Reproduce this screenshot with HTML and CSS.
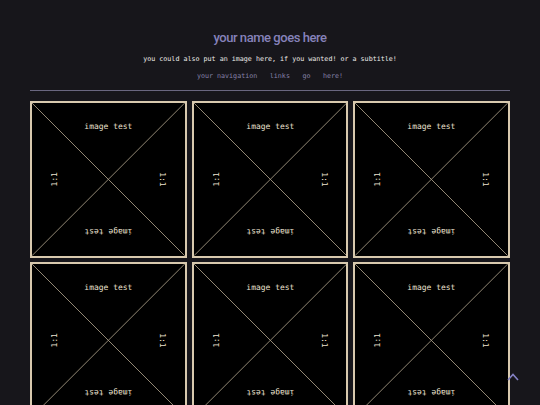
FILE: index.html
```html
<!DOCTYPE html>
<html>
<head>
<meta charset="utf-8">
<link rel="stylesheet" href="styles.css">
</head>
<body>
<div class="page">
  <header class="header">
    <h1 class="title">your name goes here</h1>
    <p class="subtitle">you could also put an image here, if you wanted! or a subtitle!</p>
    <nav class="nav">
      <a href="#">your navigation</a>
      <a href="#">links</a>
      <a href="#">go</a>
      <a href="#">here!</a>
    </nav>
  </header>
  <hr class="rule">
  <main class="grid">
    <div class="card"><svg class="ph" viewBox="0 0 153 153"><line x1="0" y1="0" x2="153" y2="153"/><line x1="153" y1="0" x2="0" y2="153"/><text x="76.5" y="24">image test</text><text transform="translate(76.5 128) rotate(180)">image test</text><text transform="translate(23 76.5) rotate(-90)">1:1</text><text transform="translate(130 76.5) rotate(90)">1:1</text></svg></div>
    <div class="card"><svg class="ph" viewBox="0 0 153 153"><line x1="0" y1="0" x2="153" y2="153"/><line x1="153" y1="0" x2="0" y2="153"/><text x="76.5" y="24">image test</text><text transform="translate(76.5 128) rotate(180)">image test</text><text transform="translate(23 76.5) rotate(-90)">1:1</text><text transform="translate(130 76.5) rotate(90)">1:1</text></svg></div>
    <div class="card"><svg class="ph" viewBox="0 0 153 153"><line x1="0" y1="0" x2="153" y2="153"/><line x1="153" y1="0" x2="0" y2="153"/><text x="76.5" y="24">image test</text><text transform="translate(76.5 128) rotate(180)">image test</text><text transform="translate(23 76.5) rotate(-90)">1:1</text><text transform="translate(130 76.5) rotate(90)">1:1</text></svg></div>
    <div class="card"><svg class="ph" viewBox="0 0 153 153"><line x1="0" y1="0" x2="153" y2="153"/><line x1="153" y1="0" x2="0" y2="153"/><text x="76.5" y="24">image test</text><text transform="translate(76.5 128) rotate(180)">image test</text><text transform="translate(23 76.5) rotate(-90)">1:1</text><text transform="translate(130 76.5) rotate(90)">1:1</text></svg></div>
    <div class="card"><svg class="ph" viewBox="0 0 153 153"><line x1="0" y1="0" x2="153" y2="153"/><line x1="153" y1="0" x2="0" y2="153"/><text x="76.5" y="24">image test</text><text transform="translate(76.5 128) rotate(180)">image test</text><text transform="translate(23 76.5) rotate(-90)">1:1</text><text transform="translate(130 76.5) rotate(90)">1:1</text></svg></div>
    <div class="card"><svg class="ph" viewBox="0 0 153 153"><line x1="0" y1="0" x2="153" y2="153"/><line x1="153" y1="0" x2="0" y2="153"/><text x="76.5" y="24">image test</text><text transform="translate(76.5 128) rotate(180)">image test</text><text transform="translate(23 76.5) rotate(-90)">1:1</text><text transform="translate(130 76.5) rotate(90)">1:1</text></svg></div>
  </main>
</div>
<a class="totop" href="#"><svg viewBox="0 0 12 8" width="12" height="8"><path d="M1 7 L6 1.5 L11 7"/></svg></a>
</body>
</html>
```
FILE: styles.css
```css
html, body {
  margin: 0;
  padding: 0;
  background: #17161b;
}
body {
  font-family: "DejaVu Sans Mono", monospace;
  color: #e6e2da;
}
.page {
  width: 480px;
  margin: 0 auto;
}
.header {
  display: flex;
  flex-direction: column;
  align-items: center;
  padding-top: 28px;
}
.title {
  margin: 0;
  font-family: Roboto, sans-serif;
  font-weight: 500;
  font-size: 13px;
  line-height: 20px;
  color: #8682ba;
  letter-spacing: -0.45px;
}
.subtitle {
  margin: 6px 0 0;
  font-size: 6.7px;
  line-height: 10px;
  color: #ecebe8;
}
.nav {
  display: flex;
  gap: 12.5px;
  margin-top: 7px;
  font-size: 6.7px;
  line-height: 10px;
}
.nav a {
  color: #8581a8;
  text-decoration: none;
}
.rule {
  margin: 9px 0 0;
  border: 0;
  height: 1px;
  background: #6a6780;
}
.grid {
  display: grid;
  grid-template-columns: repeat(3, 1fr);
  column-gap: 5px;
  row-gap: 4px;
  margin-top: 10px;
}
.card {
  aspect-ratio: 1 / 1;
  border: 2px solid #d8c9ae;
  background: #000;
  box-sizing: border-box;
  display: flex;
}
.ph {
  width: 100%;
  height: 100%;
  display: block;
}
.ph line {
  stroke: #a39782;
  stroke-width: 0.9;
}
.ph text {
  fill: #ece2d0;
  font-family: "DejaVu Sans Mono", monospace;
  font-size: 8px;
  text-anchor: middle;
  dominant-baseline: middle;
}
.totop {
  position: fixed;
  right: 21px;
  bottom: 24px;
  display: block;
  line-height: 0;
}
.totop path {
  fill: none;
  stroke: #8480c4;
  stroke-width: 1.6;
}
```
